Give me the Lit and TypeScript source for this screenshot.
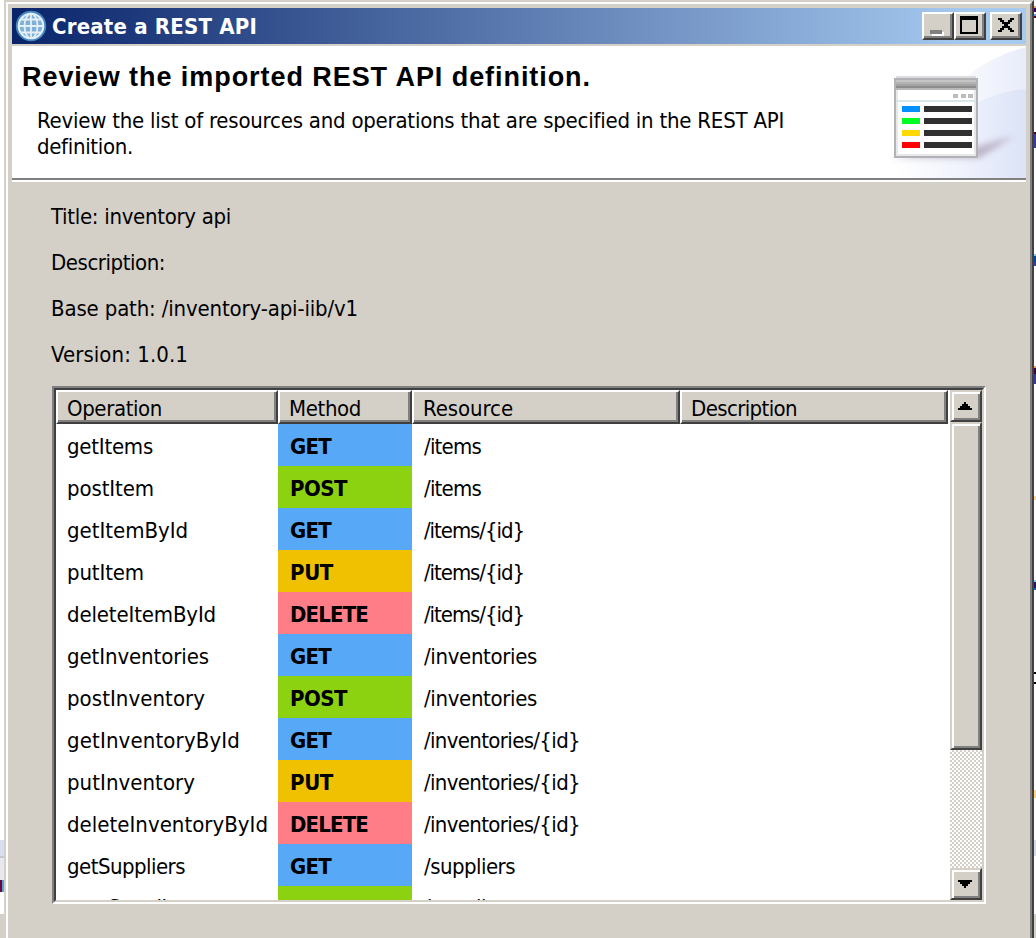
import { LitElement, html, css, svg } from "lit";
import { customElement, property } from "lit/decorators.js";

/** A single line of UI text whose tracking is adjusted to a given run width. */
@customElement("ui-text")
export class UiText extends LitElement {
  @property({ type: Number }) run = 0;

  static styles = css`
    :host {
      display: block;
      white-space: pre;
    }
    .t {
      display: inline-block;
      font-variant-ligatures: none;
    }
  `;

  updated() {
    const el = this.renderRoot.querySelector(".t") as HTMLElement;
    el.style.letterSpacing = "0px";
    const n = (this.textContent ?? "").length;
    if (this.run && n > 1) {
      const w = el.getBoundingClientRect().width;
      el.style.letterSpacing = `${(this.run - w) / n}px`;
    }
  }

  render() {
    return html`<span class="t"><slot></slot></span>`;
  }
}

type Row = [string, number, string, string, number];

const ROWS: Row[] = [
  ["getItems", 86, "GET", "/items", 57],
  ["postItem", 87, "POST", "/items", 57],
  ["getItemById", 121, "GET", "/items/{id}", 100],
  ["putItem", 77, "PUT", "/items/{id}", 100],
  ["deleteItemById", 149, "DELETE", "/items/{id}", 100],
  ["getInventories", 142, "GET", "/inventories", 113],
  ["postInventory", 138, "POST", "/inventories", 113],
  ["getInventoryById", 173, "GET", "/inventories/{id}", 156],
  ["putInventory", 128, "PUT", "/inventories/{id}", 156],
  ["deleteInventoryById", 201, "DELETE", "/inventories/{id}", 156],
  ["getSuppliers", 118, "GET", "/suppliers", 91],
  ["postSupplier", 119, "POST", "/suppliers", 91],
];

const METHOD_RUN: Record<string, number> = { GET: 41, POST: 57, PUT: 43, DELETE: 78 };

const globe = svg`
  <circle cx="16" cy="16" r="15.2" fill="#4888c0"/>
  <circle cx="16" cy="16" r="12.3" fill="#80b0d8" stroke="#e4f0f8" stroke-width="2"/>
  <g fill="none" stroke="#e4f0f8" stroke-width="1.8">
    <ellipse cx="16" cy="16" rx="6.5" ry="12.3"/>
    <path d="M16 4v24M4 16h24M6 9.500h20M6 22.500h20"/>
  </g>`;

@customElement("app-root")
export class AppRoot extends LitElement {
  static styles = css`
    :host {
      display: block;
      width: 1036px;
      height: 938px;
      overflow: hidden;
      font: 22px/26px "DejaVu Sans Condensed", "DejaVu Sans", sans-serif;
      font-stretch: condensed;
      color: #000;
    }
    * { box-sizing: border-box; }
    svg { display: block; }
    .desktop { display: flex; height: 938px; background: #fff; }
    .behind-left { width: 4px; flex: none; }
    .behind-right { width: 2px; flex: none; }
    .window {
      width: 1030px;
      height: 938px;
      background: #d4d0c8;
      border-left: 2px solid #d4d0c8;
      border-top: 2px solid #d4d0c8;
      border-right: 2px solid #404040;
    }
    .frame {
      height: 936px;
      border-left: 2px solid #fff;
      border-top: 2px solid #fff;
      border-right: 2px solid #808080;
      padding: 4px 4px 0;
    }
    .titlebar {
      height: 36px;
      display: flex;
      align-items: center;
      padding: 0 4px 0 3px;
      background: linear-gradient(90deg, #0a246a, #a6caf0 95%);
      color: #fff;
      font-weight: bold;
    }
    .titlebar ui-text { flex: 1; margin-left: 5px; padding-top: 1px; }
    .btn {
      width: 32px;
      height: 28px;
      background: #d4d0c8;
      border: 2px solid;
      border-color: #fff #404040 #404040 #fff;
      box-shadow: inset -2px -2px #808080;
    }
    .close { margin-left: 4px; }
    .banner {
      height: 134px;
      margin-top: 2px;
      background: #fff;
      border-bottom: 2px solid #808080;
      display: flex;
      justify-content: space-between;
    }
    .intro { padding: 15px 0 0 10px; }
    .heading { font: bold 27px/32px "Liberation Sans", sans-serif; }
    .copy { padding: 15px 0 0 15px; }
    .edge { height: 2px; background: #fff; }
    .body { padding: 20px 40px 0 39px; }
    .label { height: 46px; padding-top: 2px; }
    .table {
      width: 934px;
      height: 518px;
      margin-left: 1px;
      border: 2px solid;
      border-color: #808080 #fff #fff #808080;
    }
    .inner {
      height: 514px;
      border: 2px solid;
      border-color: #404040 #d4d0c8 #d4d0c8 #404040;
      background: #fff;
      display: flex;
    }
    .grid { width: 894px; height: 510px; overflow: hidden; }
    .cols { display: grid; grid-template-columns: 222px 134px 268px 268px; }
    .th {
      height: 34px;
      background: #d4d0c8;
      border: 2px solid;
      border-color: #fff #404040 #404040 #fff;
      box-shadow: inset -2px -2px #808080;
      padding: 4px 0 0 9px;
    }
    .td { height: 42px; padding: 10px 0 0 11px; }
    .cols:last-child .td:not(.m) { padding-top: 9px; }
    .m, .res { padding-left: 12px; }
    .m { font-weight: bold; }
    .GET { background: #58a8f8; }
    .POST { background: #8cd211; }
    .PUT { background: #efc100; }
    .DELETE { background: #ff7d87; }
    .scroll { width: 32px; display: flex; flex-direction: column; }
    .ctl {
      height: 32px;
      flex: none;
      background: #d4d0c8;
      border: 2px solid;
      border-color: #d4d0c8 #404040 #404040 #d4d0c8;
      box-shadow: inset 2px 2px #fff, inset -2px -2px #808080;
    }
    .thumb { height: 328px; }
    .track {
      flex: 1;
      background: conic-gradient(#d4d0c8 25%, #fff 0 50%, #d4d0c8 0 75%, #fff 0) 0 0 / 4px 4px;
    }
  `;

  render() {
    return html`
      <div class="desktop">
        <svg class="behind-left" width="4" height="938" shape-rendering="crispEdges">
          <rect y="840" width="4" height="16" fill="#d8dff2"/>
          <rect y="856" width="4" height="2" fill="#c4c8d0"/>
          <rect y="858" width="4" height="34" fill="#e8e9ec"/>
          <rect y="880" width="2" height="12" fill="#700040"/>
          <rect x="2" y="880" width="2" height="12" fill="#50a8d0"/>
          <rect y="914" width="4" height="24" fill="#d4d0c8"/>
        </svg>
        <div class="window"><div class="frame">
          <div class="titlebar">
            <svg width="32" height="32" viewBox="0 0 32 32">${globe}</svg>
            <ui-text run="205">Create a REST API</ui-text>
            <div class="btn"><svg width="28" height="24" shape-rendering="crispEdges">
              <path d="M8 18h12v4H8z" fill="#fff"/><path d="M6 16h12v4H6z" fill="#808080"/></svg></div>
            <div class="btn"><svg width="28" height="24" shape-rendering="crispEdges">
              <path d="M4 2h18v18H4zM6 6v12h14V6z" fill-rule="evenodd"/></svg></div>
            <div class="btn close"><svg width="28" height="24" shape-rendering="crispEdges">
              <path d="M6 4h4v2h2v2h4V6h2V4h4v2h-2v2h-2v2h-2v2h2v2h2v2h2v2h-4v-2h-2v-2h-4v2h-2v2H6v-2h2v-2h2v-2h2v-2h-2V8H8V6H6z"/></svg></div>
          </div>
          <div class="banner">
            <div class="intro">
              <ui-text class="heading" run="569">Review the imported REST API definition.</ui-text>
              <div class="copy">
                <ui-text run="747">Review the list of resources and operations that are specified in the REST API</ui-text>
                <ui-text run="96">definition.</ui-text>
              </div>
            </div>
            <svg width="146" height="132" viewBox="880 46 146 132">
              <defs>
                <linearGradient id="sweep" x1="0" x2="1"><stop offset="0" stop-color="#fafbfe"/><stop offset="1" stop-color="#e8ecfa"/></linearGradient>
                <linearGradient id="sweep2" x1="0" x2="1"><stop offset="0" stop-color="#fff"/><stop offset=".5" stop-color="#f0f3fd"/><stop offset="1" stop-color="#dce3f7"/></linearGradient>
                <filter id="soft" x="-.5" y="-1" width="2" height="3"><feGaussianBlur stdDeviation="3"/></filter>
              </defs>
              <path d="M958 84C974 68 1000 54 1026 47V178H958z" fill="url(#sweep)"/>
              <path d="M896 178V150L978 102C992 96 1010 90 1026 89V178z" fill="url(#sweep2)"/>
              <path d="M890 158H980L1014 136L978 146z" fill="#a090a8" opacity=".6" filter="url(#soft)"/>
              <g shape-rendering="crispEdges">
                <rect x="896" y="76" width="80" height="2" fill="#dcdcdc"/>
                <rect x="894" y="78" width="84" height="80" fill="#b0b2b6"/>
                <rect x="896" y="80" width="80" height="2" fill="#c4c4c4"/>
                <rect x="896" y="82" width="80" height="2" fill="#b4b4b4"/>
                <rect x="896" y="84" width="80" height="2" fill="#a4a4a4"/>
                <rect x="896" y="86" width="80" height="2" fill="#8c8c8c"/>
                <rect x="896" y="88" width="80" height="2" fill="#b8b8b8"/>
                <rect x="896" y="90" width="80" height="66" fill="#e6e8ea"/>
                <rect x="898" y="90" width="76" height="64" fill="#fff"/>
                <path d="M953 94h5v4h-5zM961 94h5v4h-5zM968 94h5v4h-5z" fill="#bcbcbe"/>
                <rect x="896" y="100" width="80" height="2" fill="#d8e6ea"/>
                <path d="M902 106h18v6h-18z" fill="#0090ff"/>
                <path d="M902 118h18v6h-18z" fill="#00ff20"/>
                <path d="M902 130h18v6h-18z" fill="#ffd800"/>
                <path d="M902 142h18v6h-18z" fill="#f00"/>
                <path d="M924 106h48v6h-48zM924 118h48v6h-48zM924 130h48v6h-48zM924 142h48v6h-48z" fill="#303030"/>
              </g>
            </svg>
          </div>
          <div class="edge"></div>
          <div class="body">
            <ui-text class="label" run="180">Title: inventory api</ui-text>
            <ui-text class="label" run="114">Description:</ui-text>
            <ui-text class="label" run="307">Base path: /inventory-api-iib/v1</ui-text>
            <ui-text class="label" run="137">Version: 1.0.1</ui-text>
            <div class="table"><div class="inner">
              <div class="grid">
                <div class="cols">
                  <div class="th"><ui-text run="95">Operation</ui-text></div>
                  <div class="th"><ui-text run="72">Method</ui-text></div>
                  <div class="th"><ui-text run="90">Resource</ui-text></div>
                  <div class="th"><ui-text run="106">Description</ui-text></div>
                </div>
                ${ROWS.map(([op, w, m, res, rw]) => html`
                  <div class="cols">
                    <div class="td"><ui-text run=${w}>${op}</ui-text></div>
                    <div class="td m ${m}"><ui-text run=${METHOD_RUN[m]}>${m}</ui-text></div>
                    <div class="td res"><ui-text run=${rw}>${res}</ui-text></div>
                    <div class="td"></div>
                  </div>`)}
              </div>
              <div class="scroll">
                <div class="ctl"><svg width="28" height="28" shape-rendering="crispEdges"><path d="M12 10h2v2h2v2h2v2h2v2H6v-2h2v-2h2v-2h2z"/></svg></div>
                <div class="ctl thumb"></div>
                <div class="track"></div>
                <div class="ctl"><svg width="28" height="28" shape-rendering="crispEdges"><path d="M6 10h14v2h-2v2h-2v2h-2v2h-2v-2h-2v-2H8v-2H6z"/></svg></div>
              </div>
            </div></div>
          </div>
        </div></div>
        <svg class="behind-right" width="2" height="938" shape-rendering="crispEdges">
          <rect y="6" width="2" height="2" fill="#f0a050"/><rect y="8" width="2" height="4" fill="#400060"/>
          <rect y="14" width="2" height="2" fill="#60a0e0"/><rect y="16" width="2" height="2" fill="#600020"/>
          <rect y="132" width="2" height="2" fill="#500020"/><rect y="134" width="2" height="14" fill="#3a3a98"/>
          <rect y="254" width="2" height="2" fill="#80c8f0"/><rect y="256" width="2" height="6" fill="#004890"/><rect y="262" width="2" height="4" fill="#3a3a98"/>
          <rect y="366" width="2" height="2" fill="#f0a050"/><rect y="368" width="2" height="6" fill="#400040"/><rect y="374" width="2" height="10" fill="#3a3a98"/>
          <rect y="496" width="2" height="4" fill="#ffd890"/>
          <rect y="580" width="2" height="2" fill="#80d0f8"/><rect y="582" width="2" height="6" fill="#301060"/><rect y="588" width="2" height="2" fill="#0070b8"/>
          <rect y="672" width="2" height="2"/><rect y="682" width="2" height="2"/>
          <rect y="790" width="2" height="8" fill="#ffd080"/>
          <rect y="840" width="2" height="16" fill="#d4daee"/>
          <rect y="914" width="2" height="24" fill="#d4d0c8"/>
        </svg>
      </div>`;
  }
}
